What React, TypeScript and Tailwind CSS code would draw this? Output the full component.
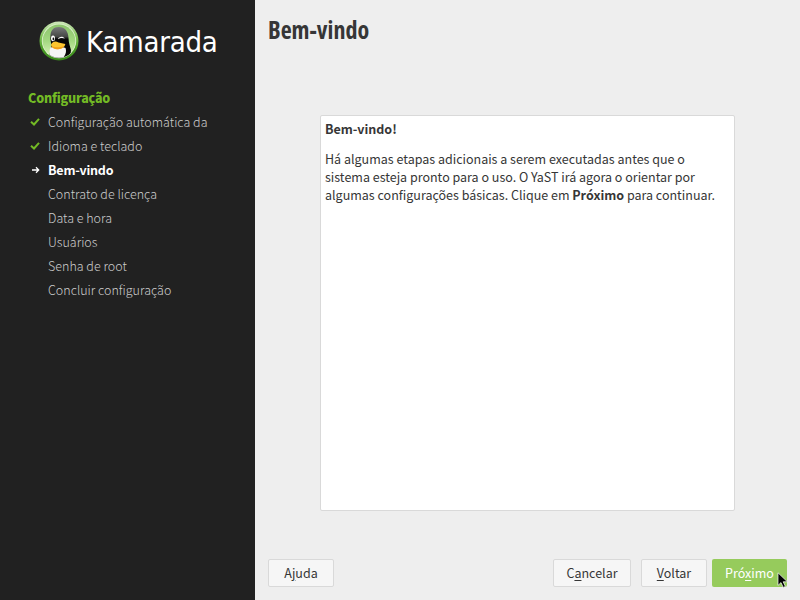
import React from 'react';

const steps = [
  { label: 'Configuração automática da', state: 'done' },
  { label: 'Idioma e teclado', state: 'done' },
  { label: 'Bem-vindo', state: 'current' },
  { label: 'Contrato de licença', state: 'todo' },
  { label: 'Data e hora', state: 'todo' },
  { label: 'Usuários', state: 'todo' },
  { label: 'Senha de root', state: 'todo' },
  { label: 'Concluir configuração', state: 'todo' },
];

function PenguinLogo() {
  return (
    <svg width="40" height="40" viewBox="0 0 40 40" className="block shrink-0">
      <defs>
        <linearGradient id="ring" x1="0" y1="0" x2="0" y2="1">
          <stop offset="0" stopColor="#cfe8bb" />
          <stop offset="0.4" stopColor="#7cc154" />
          <stop offset="0.7" stopColor="#4a9c25" />
          <stop offset="1" stopColor="#3a8a1c" />
        </linearGradient>
        <linearGradient id="disc" x1="0" y1="0" x2="0" y2="1">
          <stop offset="0" stopColor="#8cc46c" />
          <stop offset="0.5" stopColor="#a3d881" />
          <stop offset="1" stopColor="#dcf5bd" />
        </linearGradient>
        <linearGradient id="head" x1="0" y1="0" x2="0" y2="1">
          <stop offset="0" stopColor="#77797a" />
          <stop offset="0.3" stopColor="#454745" />
          <stop offset="0.38" stopColor="#060606" />
        </linearGradient>
        <clipPath id="inner"><circle cx="20" cy="20" r="16.8" /></clipPath>
      </defs>
      <circle cx="20" cy="20" r="19.5" fill="url(#ring)" />
      <circle cx="20" cy="20" r="17.2" fill="#e0f2d0" />
      <circle cx="20" cy="20" r="16.4" fill="url(#disc)" />
      <g clipPath="url(#inner)">
        <path d="M11.500 19C10.500 10 14 6 19.800 6c6.400 0 9.400 4.500 9.700 11 .2 5 1.500 8 2.500 12l-1 9H10l1-7c1.500-5 1.500-7 .5-12Z" fill="url(#head)" />
        <path d="M11.500 26.500c3-1 12-1 15 .5 1.500 4-.5 8.500-3.500 11h-9c-3.500-2-4.500-7-2.500-11.500Z" fill="#f5f5f5" />
      </g>
      <ellipse cx="14" cy="17.300" rx="2" ry="2.900" fill="#fff" />
      <ellipse cx="14.400" cy="18" rx="0.900" ry="1.400" fill="#101010" />
      <path d="M19 18.200c.6-2.600 5-3.400 6.800-.6-1.800-.9-4.800-.8-6.800.6Z" fill="#fff" />
      <path d="M12 23.400c1.600-3 4.500-3.800 7.500-2l6.800 1.600c-.6 3.300-3.800 5.300-7.500 5.200-3.400-.1-6.800-1.800-6.800-4.800Z" fill="#fcc62f" />
      <path d="M12.500 25.200c4 1.700 9 1.400 13-.5-1.100 2.300-4 3.600-6.900 3.500-2.600-.1-5.300-1.200-6.100-3Z" fill="#f0a01a" />
    </svg>
  );
}

function StepIcon({ state }: { state: string }) {
  if (state === 'done') {
    return (
      <svg width="10" height="10" viewBox="0 0 10 10" className="ml-[2px] block">
        <path d="M1 4.800 4 7.500 9 1.900" fill="none" stroke="#73ba25" strokeWidth="2" />
      </svg>
    );
  }
  if (state === 'current') {
    return (
      <svg width="8" height="8" viewBox="0 0 8 8" className="ml-[4px] block">
        <path d="M0 4h6.500M4 1.300 6.700 4 4 6.700" fill="none" stroke="#fff" strokeWidth="1.300" />
      </svg>
    );
  }
  return null;
}

export default function App() {
  return (
    <div className="flex h-[600px] w-[800px] overflow-hidden bg-[#eeeeee] font-['Noto_Sans_CJK_SC','Noto_Sans',sans-serif] text-[12.5px] text-[#363636]">
      <aside className="flex h-full w-[255px] shrink-0 flex-col bg-[#212121]">
        <header className="flex h-[86px] items-start pt-[21px] pl-[39px]">
          <PenguinLogo />
          <span className="ml-[7px] block h-[40px] w-[134px] whitespace-nowrap font-['DejaVu_Sans_Condensed','DejaVu_Sans',sans-serif] text-[29px] leading-[42px] font-normal tracking-[-0.2px] text-white [font-stretch:75%]">
            Kamarada
          </span>
        </header>
        <h2 className="h-[24px] pl-[28px] leading-[24px] font-black tracking-[-0.2px] text-[#73ba25]">Configuração</h2>
        <ol>
          {steps.map((s) => (
            <li key={s.label} className="flex h-[24px] items-center pl-[28px]">
              <span className="w-[20px]"><StepIcon state={s.state} /></span>
              <span
                className={
                  'leading-[24px] whitespace-nowrap ' +
                  (s.state === 'current' ? 'font-bold tracking-[-0.2px] text-white' : 'font-light text-[#cccccc]')
                }
              >
                {s.label}
              </span>
            </li>
          ))}
        </ol>
      </aside>
      <main className="flex flex-1 flex-col pr-[13px] pl-[13px]">
        <h1 className="mt-[13px] h-[34px] whitespace-nowrap font-['Open_Sans',sans-serif] text-[24px] leading-[34px] font-bold [font-stretch:75%]">
          Bem-vindo
        </h1>
        <section className="mt-[68px] ml-[52px] h-[396px] w-[415px] rounded-[2px] border border-[#d9d9d9] bg-white pl-[4px] leading-[18px] whitespace-nowrap">
          <p className="mt-[4px] font-bold">Bem-vindo!</p>
          <p className="mt-[12px]">
            <span className="block">Há algumas etapas adicionais a serem executadas antes que o</span>
            <span className="block">sistema esteja pronto para o uso. O YaST irá agora o orientar por</span>
            <span className="block">algumas configurações básicas. Clique em <b>Próximo</b> para continuar.</span>
          </p>
        </section>
        <footer className="mt-[48px] flex h-[28px] leading-[18px]">
          <button className="h-[28px] w-[66px] rounded-[2px] border border-[#d9d9d9] bg-[#f6f6f6]">
            A<u className="underline-offset-2">j</u>uda
          </button>
          <button className="ml-auto h-[28px] w-[78px] rounded-[2px] border border-[#d9d9d9] bg-[#f6f6f6]">
            C<u className="underline-offset-2">a</u>ncelar
          </button>
          <button className="ml-[10px] h-[28px] w-[66px] rounded-[2px] border border-[#d9d9d9] bg-[#f6f6f6]">
            <u className="underline-offset-2">V</u>oltar
          </button>
          <button className="relative ml-[5px] h-[28px] w-[75px] rounded-[2px] bg-[#96cb5c] text-white">
            Pró<u className="underline-offset-2">x</u>imo
            <svg width="12" height="18" viewBox="0 0 12 18" className="absolute top-[13px] left-[65px]">
              <path d="M1 .8v12.600l3-2.800 2.200 4.800 2.200-1-2.200-4.600h4.200Z" fill="#000" stroke="#fff" strokeWidth=".7" />
            </svg>
          </button>
        </footer>
      </main>
    </div>
  );
}
